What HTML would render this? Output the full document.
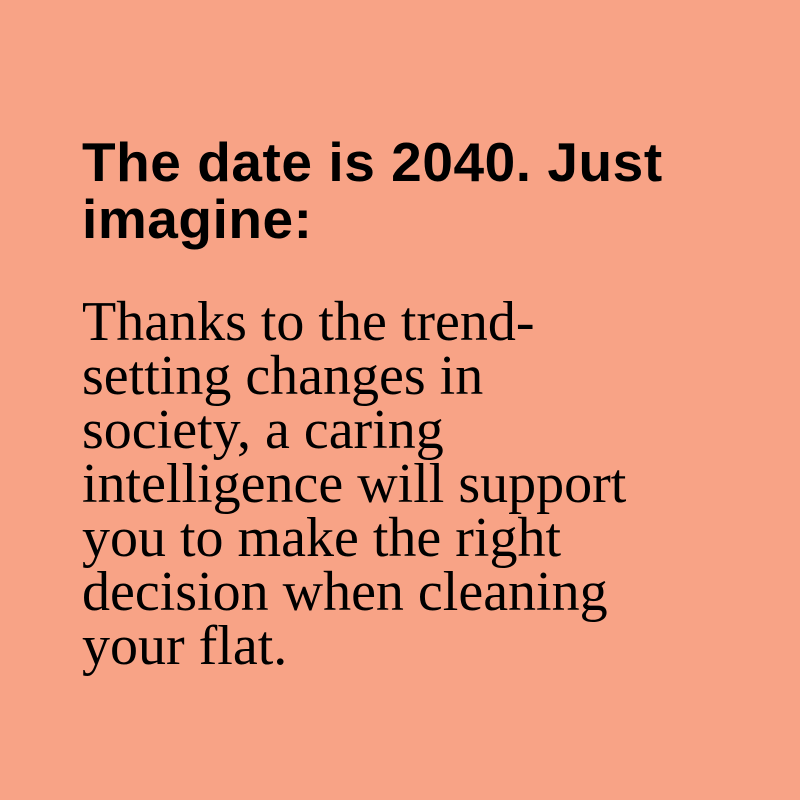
<!DOCTYPE html>
<html><head><style>
html,body{margin:0;padding:0}
body{width:800px;height:800px;background:#f8a386;position:relative;overflow:hidden}
h1{position:absolute;left:82px;top:134px;margin:0;font:bold 55px/57px "Liberation Sans",sans-serif;letter-spacing:0.55px;color:#000;width:700px}
p{position:absolute;left:82px;top:295px;margin:0;font:56px/54px "Liberation Serif",serif;color:#000;width:680px}
</style></head><body>
<h1>The date is 2040. Just<br>imagine:</h1>
<p>Thanks to the trend-<br>setting changes in<br>society, a caring<br>intelligence will support<br>you to make the right<br>decision when cleaning<br>your flat.</p>
</body></html>
